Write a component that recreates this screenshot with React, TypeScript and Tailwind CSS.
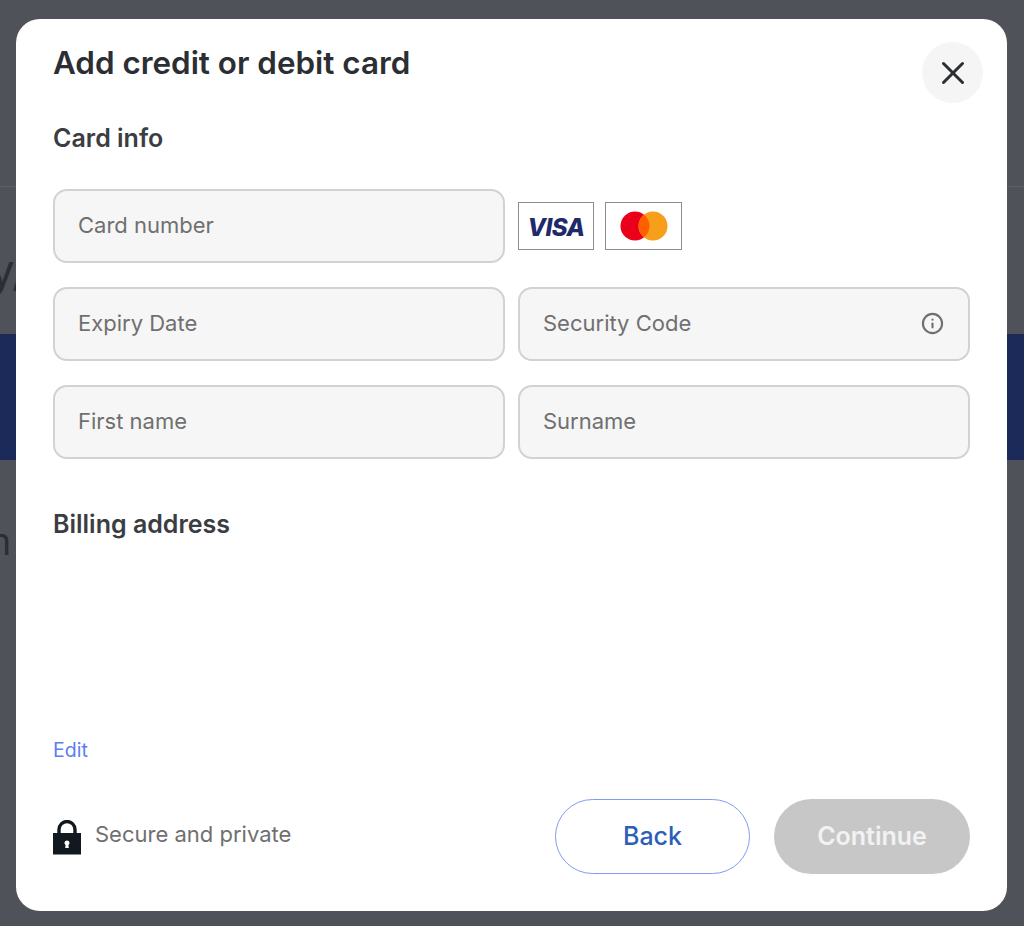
import React from "react";
import { Info, X } from "lucide-react";

function Field({ label, icon }: { label: string; icon?: boolean }) {
  return (
    <div className="flex h-[74px] min-w-0 items-center justify-between rounded-[14px] border-2 border-[#d2d2d2] bg-[#f6f6f6] pb-[2px] pl-[23px] pr-[24px] text-[22px] text-[#707070]">
      <span>{label}</span>
      {icon && <Info size={23} strokeWidth={2.2} className="text-[#6f6f6f]" />}
    </div>
  );
}

function Lock() {
  return (
    <svg width="28" height="35" viewBox="0 0 28 35" className="mt-[1px] shrink-0">
      <path d="M6 14V9.5a8 8 0 0 1 16 0V14" fill="none" stroke="#111820" strokeWidth="3.4" />
      <path fillRule="evenodd" fill="#111820" d="M0 13h28v21.5H0z M14 20.5a2.5 2.5 0 0 0-1.4 4.6l-.4 3h3.6l-.4-3a2.5 2.5 0 0 0-1.4-4.6z" />
    </svg>
  );
}

export default function App() {
  return (
    <div className="relative h-[926px] w-[1024px] overflow-hidden bg-[#4f5359] font-['Inter','Liberation_Sans',sans-serif]">
      <div className="h-[187px] border-b border-[#5c6066]" />
      <div className="h-[147px] overflow-hidden text-[44px] leading-[166px] text-[#2b2e33]">
        <span className="-ml-[10px] inline-block">y/</span>
      </div>
      <div className="h-[126px] bg-[#1b2a58]" />
      <div className="pt-[56px] text-[38px] leading-[50px] text-[#2b2e33]">
        <span className="-ml-[22px] inline-block">m</span>
      </div>

      <div className="absolute left-[16px] top-[19px] flex h-[892px] w-[991px] flex-col rounded-[24px] bg-white px-[37px]">
        <div className="flex h-[84px] items-start justify-between">
          <h1 className="pt-[24px] text-[31.4px] font-semibold leading-[40px] text-[#2b2e33]">
            Add credit or debit card
          </h1>
          <button className="mr-[-13px] mt-[23px] flex h-[61px] w-[61px] items-center justify-center rounded-full bg-[#f5f5f5] text-[#2b2e33]">
            <X size={38} strokeWidth={1.9} />
          </button>
        </div>

        <h2 className="mt-[19px] text-[25px] font-semibold leading-[32px] text-[#3a3d42]">Card info</h2>

        <div className="mt-[35px] grid grid-cols-2 gap-x-[13px] gap-y-[24px]">
          <Field label="Card number" />
          <div className="flex items-center gap-[11px]">
            <div className="flex h-[48px] w-[76px] items-center justify-center border border-[#8c8c8c] pt-[3px] text-[24px] font-extrabold italic tracking-[-0.5px] text-[#1f2a6b]">
              VISA
            </div>
            <div className="flex h-[48px] w-[77px] items-center justify-center border border-[#8c8c8c]">
              <svg width="48" height="30" viewBox="0 0 48 30">
                <circle cx="15" cy="15" r="14.5" fill="#eb001b" />
                <circle cx="33" cy="15" r="14.5" fill="#f79e1b" />
                <path d="M24 3.6a14.5 14.5 0 0 1 0 22.8a14.5 14.5 0 0 1 0-22.8z" fill="#ff5f00" />
              </svg>
            </div>
          </div>
          <Field label="Expiry Date" />
          <Field label="Security Code" icon />
          <Field label="First name" />
          <Field label="Surname" />
        </div>

        <h2 className="mt-[49px] text-[25px] font-semibold leading-[32px] text-[#3a3d42]">Billing address</h2>

        <a className="mt-[199px] text-[19.5px] leading-[22px] text-[#5a7ff0]">Edit</a>

        <div className="mt-[38px] flex items-center justify-between">
          <div className="flex items-center gap-[14px] text-[22px] text-[#707070]">
            <Lock />
            <span className="mt-[-5px]">Secure and private</span>
          </div>
          <div className="flex gap-[24px]">
            <button className="h-[75px] w-[195px] rounded-full border-[1.5px] border-[#7f9cf0] bg-white text-[25px] font-medium text-[#2d5fb8]">
              Back
            </button>
            <button className="h-[75px] w-[196px] rounded-full bg-[#c7c7c7] text-[25px] font-semibold text-[#f2f2f2]">
              Continue
            </button>
          </div>
        </div>
      </div>
    </div>
  );
}
